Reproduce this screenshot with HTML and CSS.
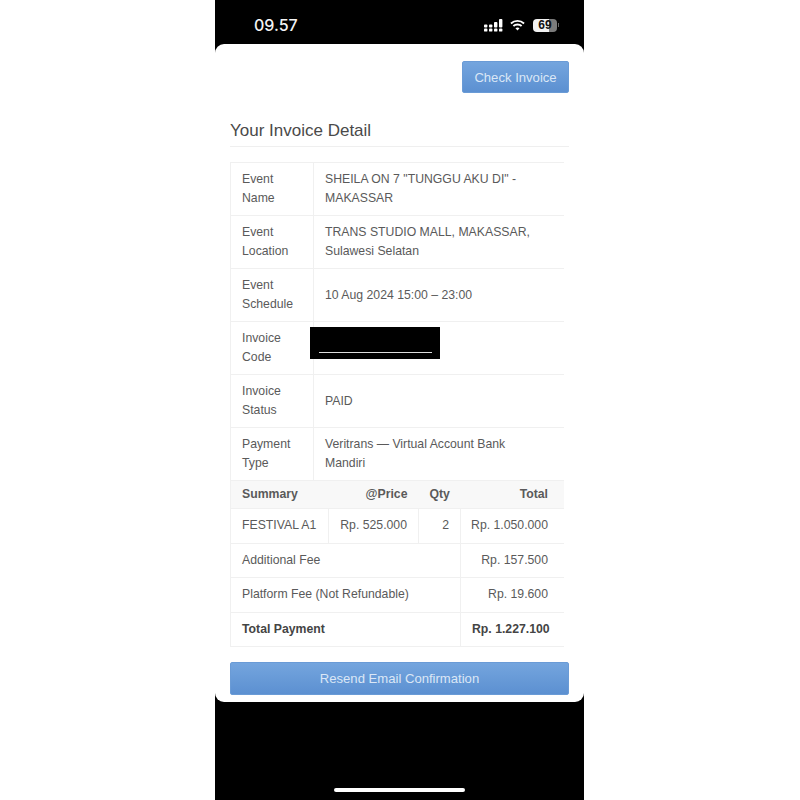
FILE: index.html
```html
<!DOCTYPE html>
<html lang="id">
<head>
<meta charset="utf-8">
<title>Invoice Detail</title>
<link rel="stylesheet" href="styles.css">
</head>
<body>
<div class="phone">
  <header class="status">
    <span class="time">09.57</span>
    <div class="status-icons">
      <svg class="signal" width="19" height="13" viewBox="0 0 19 13"><g fill="#fff"><rect x="0" y="5.5" width="3.4" height="3" rx=".9"/><rect x="0" y="9.6" width="3.4" height="3" rx=".9"/><rect x="5" y="5.5" width="3.4" height="3" rx=".9"/><rect x="5" y="9.6" width="3.4" height="3" rx=".9"/><rect x="10" y="3" width="3.4" height="5.5" rx=".9"/><rect x="10" y="9.6" width="3.4" height="3" rx=".9"/><rect x="15" y="0" width="3.4" height="8.5" rx=".9"/><rect x="15" y="9.6" width="3.4" height="3" rx=".9"/></g></svg>
      <svg class="wifi" width="16" height="12" viewBox="0 0 16 12"><g fill="none" stroke="#fff" stroke-width="2"><path d="M1 4.4C5 .7 11 .7 15 4.4"/><path d="M3.6 7.1C6 4.9 10 4.9 12.4 7.1"/></g><path d="M8 11.8 5.8 9.5C7 8.5 9 8.5 10.2 9.5Z" fill="#fff"/></svg>
      <div class="battery"><span class="battery-level">69</span></div>
      <span class="battery-cap"></span>
    </div>
  </header>
  <main class="card">
    <div class="actions"><button class="btn btn-check">Check Invoice</button></div>
    <h1 class="title">Your Invoice Detail</h1>
    <table class="info">
      <tr><th>Event Name</th><td>SHEILA ON 7 "TUNGGU AKU DI" - MAKASSAR</td></tr>
      <tr><th>Event Location</th><td>TRANS STUDIO MALL, MAKASSAR, Sulawesi Selatan</td></tr>
      <tr><th>Event Schedule</th><td>10 Aug 2024 15:00 – 23:00</td></tr>
      <tr><th>Invoice Code</th><td class="code"><div class="redact"><span class="redact-line"></span></div></td></tr>
      <tr><th>Invoice Status</th><td>PAID</td></tr>
      <tr><th>Payment Type</th><td>Veritrans — Virtual Account Bank Mandiri</td></tr>
    </table>
    <table class="summary">
      <colgroup><col class="c1"><col class="c2"><col class="c3"><col class="c4"></colgroup>
      <tr class="head"><th class="left">Summary</th><th>@Price</th><th>Qty</th><th>Total</th></tr>
      <tr class="item"><td class="left">FESTIVAL A1</td><td>Rp. 525.000</td><td>2</td><td>Rp. 1.050.000</td></tr>
      <tr><td class="left" colspan="3">Additional Fee</td><td>Rp. 157.500</td></tr>
      <tr><td class="left" colspan="3">Platform Fee (Not Refundable)</td><td>Rp. 19.600</td></tr>
      <tr class="grand"><td class="left" colspan="3">Total Payment</td><td>Rp. 1.227.100</td></tr>
    </table>
    <button class="btn btn-resend">Resend Email Confirmation</button>
  </main>
  <footer class="home"><span class="home-bar"></span></footer>
</div>
</body>
</html>
```
FILE: styles.css
```css
* { box-sizing: border-box; }
html, body { margin: 0; padding: 0; background: #fff; }
body { font-family: "Liberation Sans", Arial, sans-serif; color: #5a5a5a; overflow: hidden; }

.phone {
  width: 369px;
  height: 800px;
  margin: 0 0 0 215px;
  background: #000;
  display: flex;
  flex-direction: column;
}

.status {
  height: 44px;
  flex: none;
  display: flex;
  align-items: center;
  justify-content: space-between;
  padding: 0 25px 0 39px;
  color: #f4f4f4;
}
.time { font-size: 16px; font-weight: 500; font-family: Inter, "Liberation Sans", sans-serif; position: relative; top: 3px; }
.status-icons { display: flex; align-items: center; position: relative; top: 3px; }
.signal { margin-right: 7px; }
.wifi { margin-right: 8px; width: 15px; }
.battery {
  width: 24px;
  height: 13px;
  border-radius: 4px;
  background: linear-gradient(90deg, #f2f2f2 0, #f2f2f2 67%, #7b7b7b 67%, #7b7b7b 100%);
  display: flex;
  align-items: center;
  justify-content: center;
}
.battery-level { color: #111; font-size: 12px; font-weight: 700; line-height: 13px; }
.battery-cap { width: 1px; height: 4px; margin-left: 1px; background: #666; }

.card {
  height: 658px;
  flex: none;
  background: #fff;
  border-radius: 9px;
  padding: 17px 15px 0;
  display: flex;
  flex-direction: column;
}

.actions { display: flex; justify-content: flex-end; }
.btn {
  font-family: inherit;
  font-size: 13.1px;
  height: 33px;
  padding: 0;
  color: #dbe7f6;
  background: linear-gradient(180deg, #74a5de 0, #5c90d1 100%);
  border: 1px solid #6a9bd6;
  border-radius: 2px;
}
.btn-check { width: 107px; height: 32px; }
.btn-resend { width: 339px; margin-top: 15px; }

.title {
  margin: 28px 0 15px;
  padding-bottom: 5px;
  border-bottom: 1px solid #efefef;
  font-size: 17px;
  line-height: 20px;
  font-weight: 400;
  color: #4a4a4a;
  height: 26px;
}

table { border-collapse: collapse; table-layout: fixed; width: 334px; font-size: 12.25px; line-height: 19px; }
td, th { border: 1px solid #f0f0f0; border-right: 0; }

.info th { width: 83px; height: 53px; padding: 7px 11px; text-align: left; font-weight: 400; }
.info td { height: 53px; padding: 7px 20px 7px 11px; text-align: left; }
.code { position: relative; }
.redact {
  position: absolute;
  left: -4px;
  top: 5px;
  width: 130px;
  height: 32px;
  background: #000;
  display: flex;
  align-items: flex-end;
  justify-content: center;
  padding-bottom: 6px;
}
.redact-line { display: block; width: 113px; height: 1px; background: #ddd; }

.summary { margin-top: -1px; }
.summary .c1 { width: 98px; }
.summary .c2 { width: 90px; }
.summary .c3 { width: 42px; }
.summary td, .summary th { padding: 0 16px 0 11px; text-align: right; height: 34.5px; font-weight: 400; white-space: nowrap; }
.summary .left { text-align: left; }
.summary .head th { height: 28px; font-weight: 700; background: #f8f8f8; border-left: 0; padding-right: 11px; }
.summary .head th:first-child { border-left: 1px solid #f0f0f0; }
.summary .head th:last-child { padding-right: 16px; }
.summary .item td { padding-left: 0; padding-right: 11px; }
.summary .item td:first-child { padding-left: 11px; padding-right: 0; }
.summary .item td:last-child { padding-right: 16px; padding-left: 0; }
.summary .grand td { font-weight: 700; color: #444; }

.home { flex: 1; display: flex; justify-content: center; align-items: flex-end; padding-bottom: 8px; }
.home-bar { width: 131px; height: 4px; border-radius: 2px; background: #fff; }
```
